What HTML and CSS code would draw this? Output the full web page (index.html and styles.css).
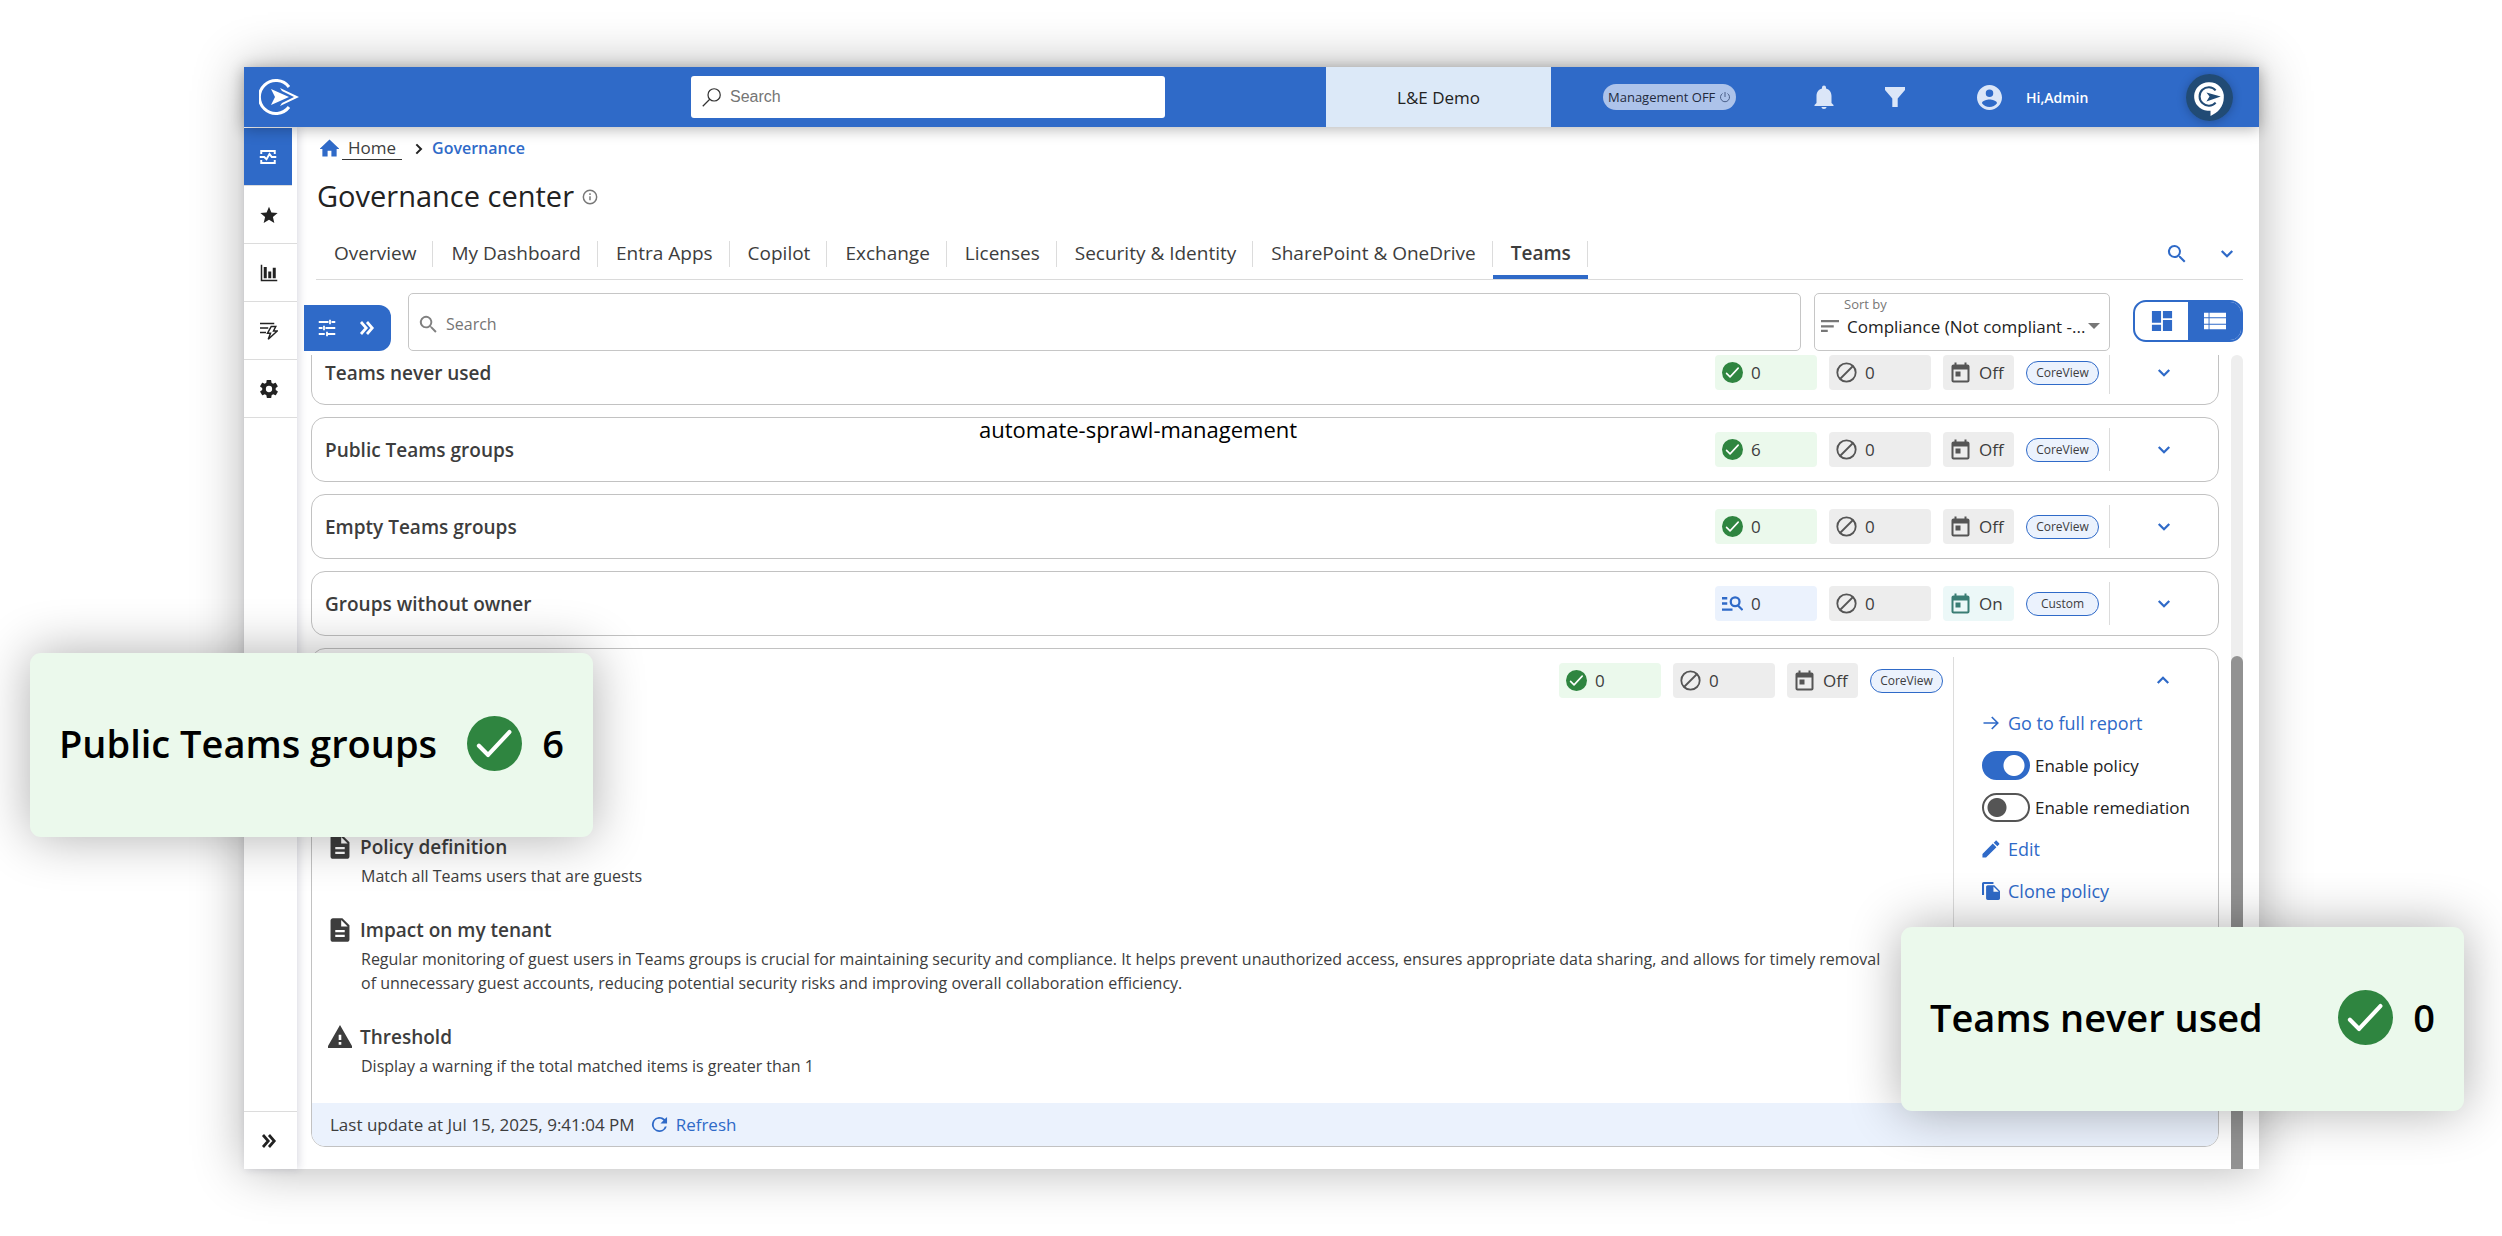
FILE: index.html
```html
<!DOCTYPE html>
<html lang="en">
<head>
    <meta charset="UTF-8">
    <meta name="viewport" content="width=device-width, initial-scale=1.0">
    <title>Governance center</title>
    <link rel="stylesheet" href="styles.css">
</head>
<body>
    <!-- Shared icons -->
    <svg class="sprite" aria-hidden="true">
        <symbol id="i-check" viewBox="0 0 24 24"><circle cx="12" cy="12" r="12" fill="#2f8540"/><path d="M5.200 13l4 4 9.300-10" fill="none" stroke="#fff" stroke-width="1.800" stroke-linecap="round" stroke-linejoin="round"/></symbol>
        <symbol id="i-ban" viewBox="1.500 1.500 21 21"><circle cx="12" cy="12" r="9.200" fill="none" stroke="currentColor" stroke-width="1.800"/><path d="M5.500 18.500l13-13" stroke="currentColor" stroke-width="1.800"/></symbol>
        <symbol id="i-cal" viewBox="1.500 1.500 21 21"><path fill="currentColor" d="M19 4h-1V2h-2v2H8V2H6v2H5c-1.100 0-2 .9-2 2v14c0 1.100.9 2 2 2h14c1.100 0 2-.9 2-2V6c0-1.100-.9-2-2-2zm0 16H5V9h14v11zM7 11h5v5H7z"/></symbol>
        <symbol id="i-down" viewBox="0 0 24 24"><path fill="none" stroke="currentColor" stroke-width="3" d="M5 8l7 7 7-7"/></symbol>
        <symbol id="i-search" viewBox="0 0 24 24"><path fill="currentColor" d="M15.500 14h-.8l-.3-.3A6.500 6.500 0 1 0 9.500 16c1.600 0 3.100-.6 4.200-1.600l.3.300v.8l5 5 1.500-1.500-5-5zm-6 0a4.500 4.500 0 1 1 0-9 4.500 4.500 0 0 1 0 9z"/></symbol>
        <symbol id="i-more" viewBox="0 0 24 24"><path fill="none" stroke="currentColor" stroke-width="3.600" d="M4 4l7 8-7 8M12 4l7 8-7 8"/></symbol>
        <symbol id="i-doc" viewBox="2 1 20 22"><path fill="currentColor" d="M14 2H6c-1.100 0-2 .9-2 2v16c0 1.100.9 2 2 2h12c1.100 0 2-.9 2-2V8l-6-6zm2 16H8v-2h8v2zm0-4H8v-2h8v2zm-3-5V3.500L18.500 9H13z"/></symbol>
        <symbol id="i-logo" viewBox="0 0 40 38"><path fill="none" stroke="currentColor" stroke-width="3" d="M30 9A16.500 16.500 0 1 0 30 29"/><path fill="currentColor" d="M12 11l18 8-18 8 4-8zM21 10l19 9-19 9 2-3 12-6-12-6z"/></symbol>
    </svg>

    <div class="app">
        <header class="topbar">
            <a class="logo" href="#" aria-label="CoreView"><svg><use href="#i-logo"/></svg></a>
            <div class="top-search">
                <svg viewBox="0 0 24 24" fill="none" stroke="#333" stroke-width="1.400"><circle cx="15" cy="9" r="7"/><path d="M10 14l-8 8"/></svg>
                <input type="search" placeholder="Search" aria-label="Search everything">
            </div>
            <div class="tenant">L&amp;E Demo</div>
            <div class="top-right">
                <button class="management">Management OFF
                    <svg viewBox="0 0 24 24" fill="none" stroke="#4a5f88" stroke-width="2"><path d="M12 2v10M7 5a9 9 0 1 0 10 0"/></svg>
                </button>
                <button class="top-icon bell" aria-label="Notifications"><svg viewBox="0 0 24 24" fill="currentColor"><path d="M12 24c1.400 0 2.500-.8 2.500-2h-5c0 1.200 1.100 2 2.500 2zm7.500-6V11c0-3.500-2-6.700-5.500-7.500V2.500a2 2 0 0 0-4 0v1C6.500 4.300 4.500 7.500 4.500 11v7L2.500 20v1h19v-1z"/></svg></button>
                <button class="top-icon funnel" aria-label="Filters"><svg viewBox="0 0 24 24" fill="currentColor"><path d="M2 2h20v3l-7.300 8.500V22H9.300v-8.500L2 5z"/></svg></button>
                <button class="user"><svg viewBox="2 2 20 20" fill="currentColor"><path d="M12 2C6.500 2 2 6.500 2 12s4.500 10 10 10 10-4.500 10-10S17.500 2 12 2zm0 3.500a3 3 0 1 1 0 6 3 3 0 0 1 0-6zm0 14c-2.500 0-4.700-1.100-6-3 0-2 4-3 6-3s6 1 6 3c-1.300 1.900-3.500 3-6 3z"/></svg>Hi,Admin</button>
                <button class="chat" aria-label="Chat"><svg viewBox="0 0 46 46"><circle cx="23" cy="23" r="23" fill="#214b75"/><path d="M23 8a14 14 0 0 0-2 28h3v5c7-3 13-9 13-18A14 14 0 0 0 23 8z" fill="#fff"/><path d="M29 16a9 9 0 1 0 0 12" fill="none" stroke="#214b75" stroke-width="2"/><path d="M20 18l14 4-14 5 3-5z" fill="#214b75"/></svg></button>
            </div>
        </header>

        <div class="shell">
            <nav class="sidebar" aria-label="Main">
                <a class="side-item active" href="#" aria-label="Governance"><svg viewBox="0 0 24 24" fill="none" stroke="currentColor" stroke-width="2.600"><path d="M3 8V4h18v4M3 16v4h18v-4M1 12h6l3 3 4-7 3 4h6"/></svg></a>
                <a class="side-item" href="#" aria-label="Favorites"><svg viewBox="0 0 24 24" fill="currentColor"><path d="M12 1l3.200 7.600 8.300.7-6.300 5.400 1.900 8L12 18.400 4.900 22.700l1.900-8L.5 9.300l8.300-.7z"/></svg></a>
                <a class="side-item" href="#" aria-label="Reports"><svg viewBox="0 0 24 24" fill="currentColor"><path d="M1 1h2v20h20v2H1zM5 4h4v15H5zM11 10h4v9h-4zM17 5h4v14h-4z"/></svg></a>
                <a class="side-item" href="#" aria-label="Actions"><svg viewBox="0 0 24 24" fill="none" stroke="currentColor" stroke-width="2"><path d="M0 2h19M0 8h11M0 14h8M15 6h6l-3 6h5L11 23l3-8h-4z"/></svg></a>
                <a class="side-item" href="#" aria-label="Settings"><svg viewBox="2 2 20 20" fill="currentColor"><path d="M19.400 13c0-.3.100-.6.100-1s0-.7-.1-1l2.100-1.600c.2-.2.300-.4.100-.6l-2-3.500c-.1-.2-.4-.3-.6-.2l-2.500 1c-.5-.4-1.100-.7-1.700-1l-.4-2.600c0-.3-.2-.5-.5-.5h-4c-.2 0-.4.200-.5.400l-.4 2.700c-.6.200-1.200.6-1.700 1l-2.500-1c-.2-.1-.5 0-.6.200l-2 3.400c-.1.300-.1.500.1.700L4.500 11a8 8 0 0 0 0 2l-2.100 1.600c-.2.200-.3.400-.1.600l2 3.500c.1.200.4.300.6.200l2.500-1c.5.400 1.100.7 1.700 1l.4 2.600c0 .3.200.5.500.5h4c.2 0 .4-.2.500-.4l.4-2.700c.6-.2 1.200-.6 1.700-1l2.500 1c.2.100.5 0 .6-.2l2-3.400c.1-.3.100-.5-.1-.7zM12 15.500a3.500 3.500 0 1 1 0-7 3.500 3.500 0 0 1 0 7z"/></svg></a>
                <button class="side-item side-expand" aria-label="Expand menu"><svg><use href="#i-more"/></svg></button>
            </nav>

            <main class="main">
                <nav class="breadcrumb" aria-label="Breadcrumb">
                    <svg class="home-icon" viewBox="2 3 20 18" fill="currentColor"><path d="M10 21v-6h4v6h5.500v-8H22.500L12 3 1.500 13h3v8z"/></svg>
                    <a class="home-link" href="#">Home</a>
                    <svg class="crumb-arrow" viewBox="0 0 12 20" fill="none" stroke="#222" stroke-width="3"><path d="M2 3l7 7-7 7"/></svg>
                    <a class="current-link" href="#">Governance</a>
                </nav>

                <h1>Governance center
                    <svg viewBox="0 0 24 24" fill="none" stroke="#777" stroke-width="2.200"><circle cx="12" cy="12" r="10"/><path d="M12 11v6M12 6.500V9"/></svg>
                </h1>

                <div class="tabs-row">
                    <nav class="tabs" aria-label="Sections">
                        <a href="#">Overview</a>
                        <a href="#">My Dashboard</a>
                        <a href="#">Entra Apps</a>
                        <a href="#">Copilot</a>
                        <a href="#">Exchange</a>
                        <a href="#">Licenses</a>
                        <a href="#">Security &amp; Identity</a>
                        <a href="#">SharePoint &amp; OneDrive</a>
                        <a href="#" class="selected">Teams</a>
                    </nav>
                    <button class="tab-tool" aria-label="Search tabs"><svg class="find"><use href="#i-search"/></svg></button>
                    <button class="tab-tool" aria-label="More tabs"><svg class="chevron"><use href="#i-down"/></svg></button>
                </div>

                <div class="toolbar">
                    <button class="filter-btn" aria-label="Open filters">
                        <svg viewBox="0 0 24 24" fill="none" stroke="currentColor" stroke-width="2.400"><path d="M1 4h13M18 4h5M16 1v6M1 12h5M10 12h13M8 9v6M1 20h8M13 20h10M12 17v6"/></svg>
                        <svg><use href="#i-more"/></svg>
                    </button>
                    <div class="list-search">
                        <svg><use href="#i-search"/></svg>
                        <input type="search" placeholder="Search" aria-label="Search policies">
                    </div>
                    <div class="sort">
                        <label for="sortBy">Sort by</label>
                        <div class="sort-row">
                            <svg viewBox="0 0 24 18" fill="#777"><path d="M0 1h24v3H0zM0 8h17v3H0zM0 14h9v3H0z"/></svg>
                            <select id="sortBy"><option>Compliance (Not compliant -...</option></select>
                        </div>
                    </div>
                    <div class="view-toggle">
                        <button aria-label="Card view"><svg viewBox="0 0 24 24" fill="currentColor"><path d="M1 1h10v13H1zM13 1h10v8H13zM13 11h10v12H13zM1 16h10v7H1z"/></svg></button>
                        <button class="on" aria-label="List view"><svg viewBox="0 0 24 24" fill="currentColor"><path d="M0 3h5v5H0zM6 3h18v5H6zM0 9h5v6H0zM6 9h18v6H6zM0 16h5v5H0zM6 16h18v5H6z"/></svg></button>
                    </div>
                </div>

                <div class="list-area">
                    <div class="policies">
                        <article class="policy">
                            <h2>Teams never used</h2>
                            <span class="chip green"><svg><use href="#i-check"/></svg>0</span>
                            <span class="chip"><svg><use href="#i-ban"/></svg>0</span>
                            <span class="chip state"><svg><use href="#i-cal"/></svg>Off</span>
                            <span class="source">CoreView</span>
                            <button class="expand" aria-label="Expand"><svg class="chevron"><use href="#i-down"/></svg></button>
                        </article>
                        <article class="policy">
                            <h2>Public Teams groups</h2>
                            <span class="chip green"><svg><use href="#i-check"/></svg>6</span>
                            <span class="chip"><svg><use href="#i-ban"/></svg>0</span>
                            <span class="chip state"><svg><use href="#i-cal"/></svg>Off</span>
                            <span class="source">CoreView</span>
                            <button class="expand" aria-label="Expand"><svg class="chevron"><use href="#i-down"/></svg></button>
                        </article>
                        <article class="policy">
                            <h2>Empty Teams groups</h2>
                            <span class="chip green"><svg><use href="#i-check"/></svg>0</span>
                            <span class="chip"><svg><use href="#i-ban"/></svg>0</span>
                            <span class="chip state"><svg><use href="#i-cal"/></svg>Off</span>
                            <span class="source">CoreView</span>
                            <button class="expand" aria-label="Expand"><svg class="chevron"><use href="#i-down"/></svg></button>
                        </article>
                        <article class="policy">
                            <h2>Groups without owner</h2>
                            <span class="chip blue"><svg viewBox="0 0 24 24" fill="none" stroke="currentColor" stroke-width="2.600"><path d="M0 6h6M0 12h6M0 19h12M18.500 14.500l5 5"/><circle cx="15" cy="10" r="5"/></svg>0</span>
                            <span class="chip"><svg><use href="#i-ban"/></svg>0</span>
                            <span class="chip state on"><svg><use href="#i-cal"/></svg>On</span>
                            <span class="source">Custom</span>
                            <button class="expand" aria-label="Expand"><svg class="chevron"><use href="#i-down"/></svg></button>
                        </article>

                        <article class="policy-open">
                            <div class="open-body">
                                <div class="open-info">
                                    <div class="open-chips">
                                        <span class="chip green"><svg><use href="#i-check"/></svg>0</span>
                                        <span class="chip"><svg><use href="#i-ban"/></svg>0</span>
                                        <span class="chip state"><svg><use href="#i-cal"/></svg>Off</span>
                                        <span class="source">CoreView</span>
                                    </div>
                                    <section class="detail">
                                        <h3><svg><use href="#i-doc"/></svg>Policy definition</h3>
                                        <p>Match all Teams users that are guests</p>
                                    </section>
                                    <section class="detail">
                                        <h3><svg><use href="#i-doc"/></svg>Impact on my tenant</h3>
                                        <p>Regular monitoring of guest users in Teams groups is crucial for maintaining security and compliance. It helps prevent unauthorized access, ensures appropriate data sharing, and allows for timely removal of unnecessary guest accounts, reducing potential security risks and improving overall collaboration efficiency.</p>
                                    </section>
                                    <section class="detail">
                                        <h3><svg viewBox="1 2 22 20" fill="currentColor"><path d="M0 22h24L12 1zM13.200 19h-2.400v-2.400h2.400zm0-4.200h-2.400V10h2.400z"/></svg>Threshold</h3>
                                        <p>Display a warning if the total matched items is greater than 1</p>
                                    </section>
                                </div>
                                <aside class="actions">
                                    <button class="expand" aria-label="Collapse"><svg class="chevron up"><use href="#i-down"/></svg></button>
                                    <a href="#"><svg viewBox="0 0 24 24" fill="none" stroke="currentColor" stroke-width="2.200"><path d="M2 12h19M13 4l8 8-8 8"/></svg>Go to full report</a>
                                    <label><input type="checkbox" checked>Enable policy</label>
                                    <label><input type="checkbox">Enable remediation</label>
                                    <a href="#"><svg viewBox="2 2 20 20" fill="currentColor"><path d="M2.500 17.500v4h4L18 10l-4-4zM21 7c.5-.5.5-1.100 0-1.500L18.500 3c-.5-.5-1.100-.5-1.500 0l-2 2 4 4z"/></svg>Edit</a>
                                    <a href="#"><svg viewBox="1 1 22 22" fill="currentColor"><path d="M15 1H3c-1.100 0-2 .9-2 2v14h2.500V3.500H15zm1 4H8c-1.100 0-2 .9-2 2v14c0 1.100.9 2 2 2h13c1.100 0 2-.9 2-2V12zm-1 8V6.500L21.500 13z"/></svg>Clone policy</a>
                                </aside>
                            </div>
                            <footer class="updated">
                                <span>Last update at Jul 15, 2025, 9:41:04 PM</span>
                                <button><svg viewBox="3 3 18 18" fill="currentColor"><path d="M17.600 6.300A8 8 0 1 0 19.700 14h-2.100A6 6 0 1 1 12 6c1.700 0 3.100.7 4.200 1.800L13 11h7V4z"/></svg>Refresh</button>
                            </footer>
                        </article>
                    </div>
                    <div class="scrollbar"><div class="thumb"></div></div>
                </div>
            </main>
        </div>
    </div>

    <p class="caption">automate-sprawl-management</p>

    <!-- Enlarged results floating over the app window -->
    <div class="callout callout-left"><strong>Public Teams groups</strong><svg><use href="#i-check"/></svg><span>6</span></div>
    <div class="callout callout-right"><strong>Teams never used</strong><svg><use href="#i-check"/></svg><span>0</span></div>
</body>
</html>
```

FILE: styles.css
```css
* {
    margin: 0;
    padding: 0;
    box-sizing: border-box;
}
body {
    position: relative;
    height: 100vh;
    padding: 67px 243px 67px 244px;
    font-family: "Open Sans", sans-serif;
    font-size: 16px;
    color: #3d3d3d;
    background: #fff;
    overflow: hidden;
}
button, input, select {
    font: inherit;
    color: inherit;
    background: none;
    border: none;
    outline: none;
}
button {
    cursor: pointer;
}
a {
    color: inherit;
    text-decoration: none;
}
svg {
    display: block;
    flex: none;
}
.sprite {
    display: none;
}
.app {
    display: flex;
    flex-direction: column;
    height: 100%;
    background: #fff;
    box-shadow: 0 0 48px rgba(0, 0, 0, 0.3);
}

/* Top bar */
.topbar {
    position: relative;
    z-index: 2;
    display: flex;
    align-items: center;
    height: 60px;
    background: #2f6ac8;
    box-shadow: 0 2px 14px rgba(0, 0, 0, 0.3);
}
.logo {
    flex: 0 1 447px;
    padding-left: 15px;
    color: #fff;
}
.logo svg {
    width: 40px;
    height: 38px;
}
.top-search {
    display: flex;
    flex: 0 1 474px;
    align-items: center;
    gap: 8px;
    height: 42px;
    padding: 0 10px;
    background: #fff;
    border-radius: 3px;
}
.top-search svg {
    width: 21px;
    height: 21px;
}
.top-search input {
    width: 100%;
    font-family: "Liberation Sans", sans-serif;
    color: #666;
}
input::placeholder {
    color: #757575;
    opacity: 1;
}
.tenant {
    display: flex;
    align-items: center;
    justify-content: center;
    width: 225px;
    height: 100%;
    margin-left: 161px;
    font-size: 17px;
    color: #222;
    background: #dce9f8;
}
.top-right {
    display: flex;
    flex: 1;
    align-items: center;
    padding-left: 52px;
}
.management {
    display: flex;
    align-items: center;
    justify-content: space-between;
    width: 133px;
    height: 26px;
    padding: 0 5px;
    font-size: 13px;
    white-space: nowrap;
    color: #1f2a3d;
    background: #adc3ea;
    border-radius: 13px;
}
.management svg {
    width: 12px;
    height: 12px;
}
.top-icon {
    color: #dbe6f8;
}
.top-icon svg {
    width: 24px;
    height: 24px;
}
.bell {
    margin-left: 76px;
}
.funnel {
    margin-left: 47px;
}
.user {
    display: flex;
    align-items: center;
    gap: 24px;
    margin-left: 70px;
    font-size: 14px;
    font-weight: 600;
    color: #fff;
}
.user svg {
    width: 25px;
    height: 25px;
    color: #dbe6f8;
}
.chat {
    margin: 0 26px 0 auto;
    border-radius: 50%;
    box-shadow: 0 1px 10px rgba(0, 0, 0, 0.25);
}
.chat svg {
    width: 47px;
    height: 47px;
}

/* Side menu */
.shell {
    display: flex;
    flex: 1;
    min-height: 0;
}
.sidebar {
    display: flex;
    flex-direction: column;
    width: 53px;
    padding-top: 1px;
    box-shadow: 2px 0 8px rgba(40, 40, 80, 0.16);
}
.side-item {
    display: flex;
    align-items: center;
    justify-content: center;
    height: 58px;
    padding-right: 4px;
    color: #222;
    border-bottom: 1px solid #dcdcdc;
}
.side-item svg {
    width: 18px;
    height: 18px;
}
.side-item.active {
    width: 48px;
    padding: 0;
    color: #fff;
    background: #2f6ac8;
}
.side-expand {
    margin-top: auto;
    border-top: 1px solid #dcdcdc;
    border-bottom: none;
}

/* Page content */
.main {
    display: flex;
    flex: 1;
    flex-direction: column;
    min-width: 0;
    padding: 9px 16px 0 7px;
}
.breadcrumb {
    display: flex;
    align-items: center;
    height: 24px;
    padding-left: 16px;
    font-size: 17px;
}
.home-icon {
    width: 19px;
    height: 18px;
    color: #2f6ac8;
}
.home-link {
    height: 23px;
    margin-left: 3px;
    padding: 0 6px;
    line-height: 22px;
    border-bottom: 1px solid #333;
}
.crumb-arrow {
    width: 8px;
    height: 14px;
    margin: 2px 9px 0 13px;
}
.current-link {
    font-size: 16px;
    font-weight: 600;
    color: #2f6ac8;
}
h1 {
    display: flex;
    align-items: center;
    gap: 8px;
    height: 38px;
    margin-top: 16px;
    padding-left: 13px;
    font-size: 29px;
    font-weight: 500;
    color: #222;
}
h1 svg {
    width: 16px;
    height: 16px;
    margin-top: 4px;
}
.tabs-row {
    display: flex;
    align-items: center;
    height: 51px;
    margin: 15px 0 0 12px;
    border-bottom: 1px solid #dadada;
}
.tabs {
    display: flex;
    flex: 1;
    height: 50px;
}
.tabs a {
    display: flex;
    align-items: center;
    padding: 2px 17px 0 18px;
    font-size: 19px;
    white-space: nowrap;
    background: linear-gradient(#dcdcdc, #dcdcdc) right 12px / 1px 26px no-repeat;
    border-bottom: 4px solid transparent;
}
.tabs .selected {
    font-weight: 600;
    border-bottom-color: #2f6ac8;
}
.tab-tool {
    margin-right: 7px;
    margin-left: 22px;
    color: #2f6ac8;
}
.find {
    width: 24px;
    height: 24px;
}
.chevron {
    width: 18px;
    height: 18px;
    color: #2f6ac8;
}
.up {
    transform: rotate(180deg);
}

/* Filter, search, sort */
.toolbar {
    display: flex;
    align-items: flex-end;
    height: 58px;
    margin-top: 13px;
}
.filter-btn {
    display: flex;
    align-items: center;
    gap: 22px;
    width: 87px;
    height: 46px;
    padding-left: 14px;
    color: #fff;
    background: #2f6ac8;
    border-radius: 0 12px 12px 0;
}
.filter-btn svg {
    width: 18px;
    height: 18px;
}
.list-search {
    display: flex;
    flex: 1;
    align-items: center;
    gap: 6px;
    height: 58px;
    margin-left: 17px;
    padding: 4px 8px 0;
    border: 1px solid #c6c6c6;
    border-radius: 5px;
}
.list-search svg {
    width: 23px;
    height: 23px;
    color: #808080;
}
.list-search input {
    width: 100%;
}
.sort {
    width: 296px;
    height: 58px;
    margin-left: 13px;
    padding: 1px 6px;
    border: 1px solid #c6c6c6;
    border-radius: 5px;
}
.sort label {
    display: block;
    padding-left: 23px;
    font-size: 13px;
    line-height: 18px;
    color: #777;
}
.sort-row {
    display: flex;
    align-items: center;
    gap: 8px;
}
.sort-row svg {
    width: 18px;
    height: 14px;
}
.sort select {
    flex: 1;
    min-width: 0;
    height: 26px;
    font-size: 17px;
    color: #222;
    appearance: none;
}
.sort-row::after {
    content: '';
    margin: 0 3px 0 -12px;
    border: 6px solid transparent;
    border-top-color: #777;
    border-bottom: none;
}
.view-toggle {
    display: flex;
    width: 110px;
    height: 42px;
    margin: 0 0 9px 23px;
    overflow: hidden;
    border: 2px solid #2f6ac8;
    border-radius: 13px;
}
.view-toggle button {
    display: flex;
    flex: 1;
    align-items: center;
    justify-content: center;
    color: #2f6ac8;
}
.view-toggle .on {
    color: #fff;
    background: #2f6ac8;
}
.view-toggle svg {
    width: 22px;
    height: 22px;
}

/* Policies list */
.list-area {
    display: flex;
    flex: 1;
    gap: 12px;
    min-height: 0;
    margin-top: 4px;
    padding-left: 7px;
}
.policies {
    display: flex;
    flex: 1;
    flex-direction: column;
    justify-content: flex-end;
    gap: 12px;
    min-width: 0;
    padding-bottom: 22px;
    overflow: hidden;
}
.policy {
    display: flex;
    flex: none;
    align-items: center;
    gap: 12px;
    height: 65px;
    padding-left: 13px;
    border: 1px solid #c2c2c2;
    border-radius: 14px;
}
.policy h2 {
    flex: 1;
    font-size: 19px;
    font-weight: 600;
}
.chip {
    display: flex;
    align-items: center;
    gap: 8px;
    width: 102px;
    height: 35px;
    padding-left: 7px;
    font-size: 17px;
    color: #3d3d3d;
    background: #ededed;
    border-radius: 4px;
}
.chip svg {
    width: 21px;
    height: 21px;
    color: #555;
}
.green {
    background: #ebf9ec;
}
.blue {
    background: #ebf2fd;
}
.blue svg {
    color: #2f6ac8;
}
.state {
    width: 71px;
}
.state.on {
    background: #ecf8f8;
}
.state.on svg {
    color: #3a7d74;
}
.source {
    width: 73px;
    height: 24px;
    font-size: 12px;
    line-height: 22px;
    text-align: center;
    background: #ebf2fd;
    border: 1px solid #2f6ac8;
    border-radius: 12px;
}
.expand {
    display: flex;
    align-items: center;
    justify-content: center;
    height: 43px;
}
.policy .expand {
    width: 109px;
    margin-left: -2px;
    border-left: 1px solid #dcdcdc;
}
.policy-open {
    flex: none;
    overflow: hidden;
    border: 1px solid #c2c2c2;
    border-radius: 14px;
}
.open-body {
    display: flex;
    padding-top: 8px;
}
.open-info {
    flex: 1;
    min-width: 0;
    padding: 6px 10px 0 16px;
}
.open-chips {
    display: flex;
    align-items: center;
    justify-content: flex-end;
    gap: 12px;
    height: 35px;
    margin-bottom: 132px;
}
.detail {
    margin-bottom: 25px;
}
.detail h3 {
    display: flex;
    align-items: center;
    gap: 8px;
    height: 34px;
    font-size: 19px;
    font-weight: 600;
}
.detail h3 svg {
    width: 24px;
    height: 26px;
}
.detail p {
    padding: 0 52px 0 33px;
    line-height: 24px;
}
.actions {
    display: flex;
    flex-direction: column;
    align-items: flex-start;
    width: 265px;
    padding-left: 28px;
    font-size: 17px;
    color: #222;
    border-left: 1px solid #dcdcdc;
}
.actions .expand {
    justify-content: flex-start;
    width: 100%;
    height: 45px;
    padding-left: 172px;
}
.actions a, .actions label {
    display: flex;
    align-items: center;
    gap: 5px;
    height: 42px;
}
.actions a {
    gap: 8px;
    font-size: 18px;
    color: #2f6ac8;
}
.actions a svg {
    width: 18px;
    height: 18px;
}
.actions input {
    width: 48px;
    height: 29px;
    appearance: none;
    background: radial-gradient(circle at 13px, #555 9px, transparent 10px);
    border: 2px solid #555;
    border-radius: 15px;
}
.actions input:checked {
    background: radial-gradient(circle at 30px, #fff 10px, #2f6ac8 11px);
    border-color: #2f6ac8;
}
.updated {
    display: flex;
    align-items: center;
    gap: 16px;
    height: 43px;
    padding: 0 18px;
    font-size: 17px;
    background: #ebf2fd;
}
.updated button {
    display: flex;
    align-items: center;
    gap: 8px;
    color: #2f6ac8;
}
.updated svg {
    width: 17px;
    height: 17px;
}
.scrollbar {
    display: flex;
    flex-direction: column;
    justify-content: flex-end;
    width: 12px;
    background: #eee;
    border-radius: 6px 6px 0 0;
}
.thumb {
    height: 63%;
    background: #929292;
    border-radius: 6px 6px 0 0;
}

/* Floating elements */
.caption {
    position: absolute;
    top: 414px;
    left: 979px;
    font-size: 22px;
    line-height: 30px;
    color: #000;
}
.callout {
    position: absolute;
    z-index: 3;
    display: flex;
    align-items: center;
    gap: 20px;
    width: 563px;
    height: 184px;
    padding: 0 29px 4px;
    font-size: 38px;
    font-weight: 600;
    color: #000;
    background: #ebf9ec;
    border-radius: 11px;
    box-shadow: 0 0 52px rgba(0, 0, 0, 0.32);
}
.callout strong {
    flex: 1;
    font-weight: 600;
    white-space: nowrap;
}
.callout svg {
    width: 55px;
    height: 55px;
}
.callout-left {
    top: 653px;
    left: 30px;
}
.callout-right {
    top: 927px;
    right: 38px;
}
```
